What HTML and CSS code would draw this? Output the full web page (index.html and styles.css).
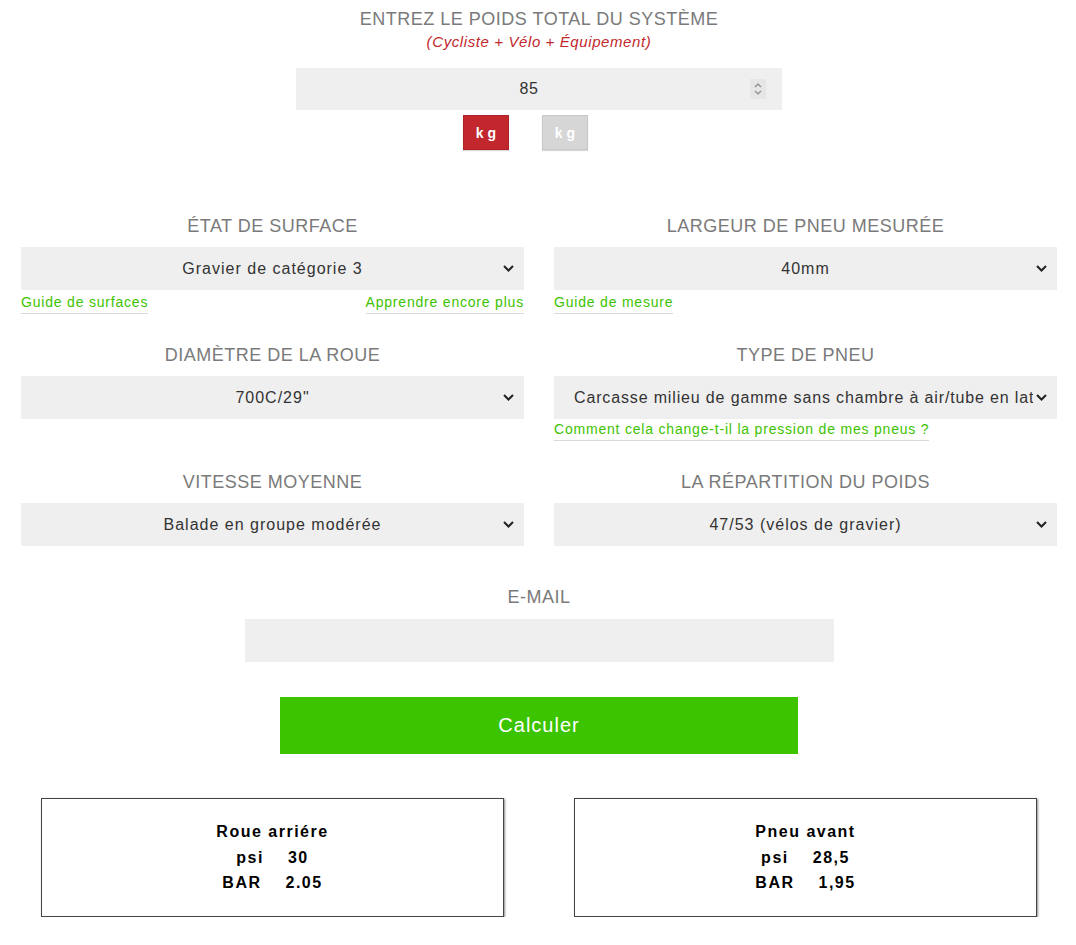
FILE: index.html
```html
<!DOCTYPE html>
<html lang="fr">
<head>
  <meta charset="UTF-8">
  <meta name="viewport" content="width=device-width, initial-scale=1">
  <title>Calculateur de pression</title>
  <link rel="stylesheet" href="styles.css">
</head>
<body>
  <main class="calculator">
    <!-- Poids -->
    <section class="weight">
      <h2 class="label">ENTREZ LE POIDS TOTAL DU SYSTÈME</h2>
      <p class="hint">(Cycliste + Vélo + Équipement)</p>
      <div class="number-input">
        <span class="value">85</span>
        <span class="spinner">
          <svg width="8" height="14" viewBox="0 0 8 14"><path d="M1 5 L4 2 L7 5 M1 9 L4 12 L7 9" fill="none" stroke="#8a8a8a" stroke-width="1.2"/></svg>
        </span>
      </div>
      <div class="units">
        <button class="unit-btn active">kg</button>
        <button class="unit-btn">kg</button>
      </div>
    </section>

    <!-- Options -->
    <section class="fields">
      <div class="field">
        <h2 class="label">ÉTAT DE SURFACE</h2>
        <div class="select">
          <span class="select-text">Gravier de catégorie 3</span>
          <svg class="chevron" width="11" height="7" viewBox="0 0 11 7"><path d="M1 1 L5.5 5.5 L10 1" fill="none" stroke="#222" stroke-width="2"/></svg>
        </div>
        <div class="links">
          <a href="#">Guide de surfaces</a>
          <a href="#">Apprendre encore plus</a>
        </div>
      </div>

      <div class="field">
        <h2 class="label">LARGEUR DE PNEU MESURÉE</h2>
        <div class="select">
          <span class="select-text">40mm</span>
          <svg class="chevron" width="11" height="7" viewBox="0 0 11 7"><path d="M1 1 L5.5 5.5 L10 1" fill="none" stroke="#222" stroke-width="2"/></svg>
        </div>
        <div class="links">
          <a href="#">Guide de mesure</a>
        </div>
      </div>

      <div class="field">
        <h2 class="label">DIAMÈTRE DE LA ROUE</h2>
        <div class="select">
          <span class="select-text">700C/29"</span>
          <svg class="chevron" width="11" height="7" viewBox="0 0 11 7"><path d="M1 1 L5.5 5.5 L10 1" fill="none" stroke="#222" stroke-width="2"/></svg>
        </div>
      </div>

      <div class="field">
        <h2 class="label">TYPE DE PNEU</h2>
        <div class="select long">
          <span class="select-text">Carcasse milieu de gamme sans chambre à air/tube en lat</span>
          <svg class="chevron" width="11" height="7" viewBox="0 0 11 7"><path d="M1 1 L5.5 5.5 L10 1" fill="none" stroke="#222" stroke-width="2"/></svg>
        </div>
        <div class="links tight">
          <a href="#">Comment cela change-t-il la pression de mes pneus ?</a>
        </div>
      </div>

      <div class="field">
        <h2 class="label">VITESSE MOYENNE</h2>
        <div class="select">
          <span class="select-text">Balade en groupe modérée</span>
          <svg class="chevron" width="11" height="7" viewBox="0 0 11 7"><path d="M1 1 L5.5 5.5 L10 1" fill="none" stroke="#222" stroke-width="2"/></svg>
        </div>
      </div>

      <div class="field">
        <h2 class="label">LA RÉPARTITION DU POIDS</h2>
        <div class="select">
          <span class="select-text">47/53 (vélos de gravier)</span>
          <svg class="chevron" width="11" height="7" viewBox="0 0 11 7"><path d="M1 1 L5.5 5.5 L10 1" fill="none" stroke="#222" stroke-width="2"/></svg>
        </div>
      </div>
    </section>

    <!-- E-mail -->
    <section class="email">
      <h2 class="label">E-MAIL</h2>
      <input type="email" class="email-input">
    </section>

    <button class="calc-btn">Calculer</button>

    <!-- Résultats -->
    <section class="results">
      <div class="result-col">
        <div class="result-box">
          <p class="result-title">Roue arriére</p>
          <p><span>psi</span><span class="num">30</span></p>
          <p><span>BAR</span><span class="num">2.05</span></p>
        </div>
      </div>
      <div class="result-col">
        <div class="result-box">
          <p class="result-title">Pneu avant</p>
          <p><span>psi</span><span class="num">28,5</span></p>
          <p><span>BAR</span><span class="num">1,95</span></p>
        </div>
      </div>
    </section>
  </main>
</body>
</html>
```

FILE: styles.css
```css
/* Reset */
* {
  margin: 0;
  padding: 0;
  box-sizing: border-box;
}

body {
  font-family: "Liberation Sans", Arial, sans-serif;
  background: #fff;
  color: #333;
}

.calculator {
  width: 1036px;
  margin-left: 21px;
  padding-top: 8px;
}

/* Labels */
.label {
  font-size: 18px;
  font-weight: normal;
  line-height: 22px;
  letter-spacing: 0.5px;
  color: #7a7a7a;
  text-align: center;
}

/* Weight section */
.weight {
  display: flex;
  flex-direction: column;
  align-items: center;
}

.hint {
  font-size: 15px;
  font-style: italic;
  color: #c1272d;
  line-height: 20px;
  letter-spacing: 0.6px;
  margin-top: 2px;
}

.number-input {
  position: relative;
  width: 486px;
  height: 42px;
  margin-top: 16px;
  padding-right: 20px;
  background: #efefef;
  display: flex;
  align-items: center;
  justify-content: center;
  font-size: 16px;
  letter-spacing: 0.5px;
  color: #333;
}

.spinner {
  position: absolute;
  right: 16px;
  top: 11px;
  width: 16px;
  height: 20px;
  background: #e6e6e6;
  display: flex;
  align-items: center;
  justify-content: center;
}

.units {
  display: flex;
  gap: 33px;
  margin-top: 5px;
  padding-right: 27px;
}

.unit-btn {
  width: 46px;
  height: 35px;
  border: 1px solid #c8c8c8;
  background: #d6d6d6;
  color: #fff;
  font-family: "Liberation Sans", Arial, sans-serif;
  font-size: 14px;
  font-weight: bold;
  letter-spacing: 4px;
  padding-left: 4px;
  box-shadow: 0 1px 1px rgba(0, 0, 0, 0.15);
}

.unit-btn.active {
  background: #c1272d;
  border-color: #b02028;
}

/* Option grid */
.fields {
  display: grid;
  grid-template-columns: 503px 503px;
  column-gap: 30px;
  row-gap: 30px;
  margin-top: 65px;
}

.select {
  height: 43px;
  margin-top: 10px;
  background: #efefef;
  display: flex;
  align-items: center;
  padding: 0 40px;
  position: relative;
  font-size: 16px;
  letter-spacing: 1px;
  color: #333;
}

.select-text {
  flex: 1;
  text-align: center;
  white-space: nowrap;
  overflow: hidden;
}

.select.long {
  padding: 0 24px 0 20px;
  letter-spacing: 0.85px;
}

.select.long .select-text {
  text-align: left;
}

.chevron {
  position: absolute;
  right: 10px;
  top: 18px;
}

.links {
  display: flex;
  justify-content: space-between;
  align-items: flex-start;
  margin-top: 3px;
}

.links.tight {
  margin-top: 1px;
}

.links a {
  font-size: 14px;
  line-height: 18px;
  color: #3dc300;
  text-decoration: none;
  letter-spacing: 0.8px;
  border-bottom: 1px solid #d8d8d8;
  padding-bottom: 2px;
}

/* E-mail */
.email {
  display: flex;
  flex-direction: column;
  align-items: center;
  margin-top: 40px;
}

.email-input {
  width: 589px;
  height: 43px;
  margin-top: 11px;
  border: none;
  background: #efefef;
}

.calc-btn {
  display: block;
  width: 518px;
  height: 57px;
  margin: 35px auto 0;
  background: #3dc400;
  color: #fff;
  border: none;
  font-family: "Liberation Sans", Arial, sans-serif;
  font-size: 20px;
  letter-spacing: 1px;
}

/* Results */
.results {
  display: grid;
  grid-template-columns: 503px 503px;
  column-gap: 30px;
  margin-top: 44px;
}

.result-col {
  padding: 0 20px;
}

.result-box {
  height: 119px;
  border: 1px solid #444;
  box-shadow: 1px 1px 2px rgba(0, 0, 0, 0.45);
  padding-top: 20px;
  text-align: center;
  font-size: 16px;
  font-weight: bold;
  color: #000;
  letter-spacing: 1.5px;
}

.result-box p {
  line-height: 25.5px;
}

.result-box .num {
  margin-left: 24px;
}
```
